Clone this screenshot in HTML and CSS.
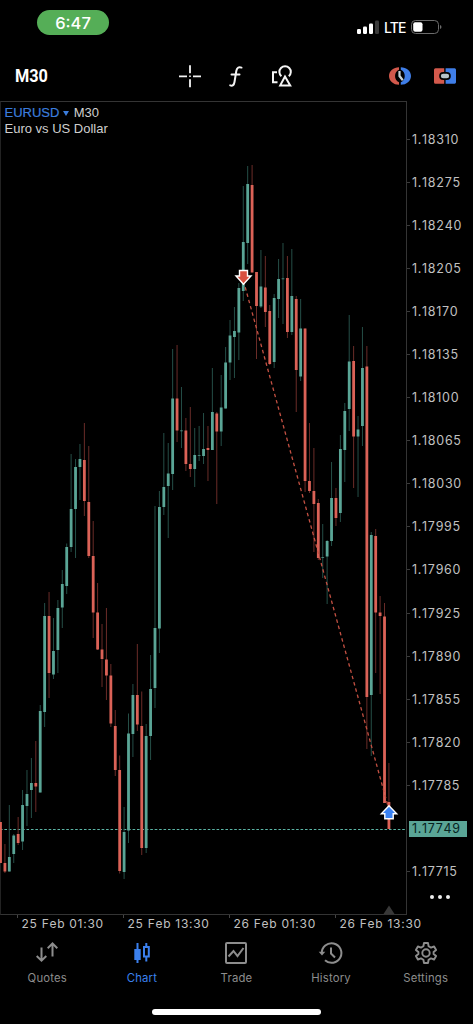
FILE: index.html
```html
<!DOCTYPE html>
<html lang="en">
<head>
<meta charset="utf-8">
<title>EURUSD M30</title>
<link rel="stylesheet" href="styles.css">
</head>
<body>
<div class="app">
  <header class="status">
    <span class="clock">6:47</span>
    <div class="signals">
      <svg width="22" height="14" viewBox="0 0 22 14"><g fill="#fff"><rect x="0" y="9" width="4" height="5" rx="1.2"/><rect x="6" y="6.500" width="4" height="7.500" rx="1.200"/><rect x="12" y="3.500" width="4" height="10.500" rx="1.200"/></g><rect x="18" y="0.500" width="4" height="13.500" rx="1.200" fill="#3a3a3a"/></svg>
      <span class="lte">LTE</span>
      <svg width="31" height="14" viewBox="0 0 31 14"><rect x=".5" y=".5" width="27" height="13" rx="4" fill="none" stroke="#6c6c6c"/><rect x="2.200" y="2.200" width="9.300" height="9.600" rx="2" fill="#fff"/><path d="M29 5v4q1.500-.6 1.500-2T29 5z" fill="#6c6c6c"/></svg>
    </div>
  </header>

  <div class="toolbar">
    <span class="period">M30</span>
    <div class="tools">
      <svg class="tool" viewBox="0 0 24 24" stroke="#f4f4f4" stroke-width="1.800"><path d="M1 12.300h8M15 12.300h8M12 1.300v8M12 15.300v8"/><path d="M11.200 12.300h1.600" stroke-width="1.500"/></svg>
      <svg class="tool" viewBox="0 0 24 24" fill="none" stroke="#f4f4f4" stroke-width="2" stroke-linecap="round"><path d="M17.500 3.600c-3-.9-4.600.2-5.200 3.400L10.500 18c-.5 3-1.900 4.200-4.300 3.400M7.500 10.500h8"/></svg>
      <svg class="tool" viewBox="0 0 24 24" fill="none" stroke="#f4f4f4" stroke-width="2"><path d="M7 8.300H3v10h4.500"/><path d="M11.400 12.300a5.700 5.700 0 1 1 7.400 0"/><path d="M15 12.500 10.200 21.400h10z"/></svg>
    </div>
    <div class="trade-tools">
      <svg class="tool" viewBox="0 0 24 24"><path d="M11 3.200C5.500 3.200 1 7 1 12s4.500 8.800 10 8.800v-2.500a7 7 0 0 1 0-12.600z" fill="#d3594c"/><path d="M12.800 3.200C18.500 3.200 23 7 23 12s-4.500 8.800-10.200 8.800v-2.500a7 7 0 0 0 0-12.600z" fill="#3f7ee8"/><path d="M11.500 7v5l3.300 4.200" fill="none" stroke="#c9d3d8" stroke-width="2.200"/></svg>
      <svg class="tool" viewBox="0 0 24 24"><path d="M2.500 4.200h8.700v15.600H2.500A1.500 1.500 0 0 1 1 18.300V5.700a1.500 1.500 0 0 1 1.500-1.500z" fill="#d3594c"/><path d="M12.600 4.200h9A1.500 1.500 0 0 1 23 5.700v12.600a1.500 1.500 0 0 1-1.400 1.500h-9z" fill="#3f7ee8"/><rect x="7" y="8.800" width="10" height="6.400" rx="3.200" fill="#b8c4ca" stroke="#050505" stroke-width="1.700"/></svg>
    </div>
  </div>

  <main class="chart">
    <div class="plot">
      <svg class="candles" id="candles" width="407" height="814" viewBox="0 101 407 814">
        <path class="price-line" d="M0 829.500H406"/>
        <g id="bars"></g>
        <path class="deal-line" d="M243.500 281 388.500 808"/>
        <path d="M243.500 284.300 236 276h3.500v-5.500h8V276h3.500z" fill="#d9503f" stroke="#fff" stroke-width="1.400"/>
        <path d="M389 805.700 381.300 813.800h3.500v5h8.400v-5h3.500z" fill="#3b82f2" stroke="#fff" stroke-width="1.400"/>
        <path d="M383.500 914 389 905.500l5.500 8.500z" fill="#383838"/>
      </svg>
      <div class="caption">
        <div><span class="symbol">EURUSD <i class="caret"></i></span> M30</div>
        <div>Euro vs US Dollar</div>
      </div>
    </div>
    <div class="prices">
      <span>1.18310</span><span>1.18275</span><span>1.18240</span><span>1.18205</span><span>1.18170</span><span>1.18135</span><span>1.18100</span><span>1.18065</span><span>1.18030</span><span>1.17995</span><span>1.17960</span><span>1.17925</span><span>1.17890</span><span>1.17855</span><span>1.17820</span><span>1.17785</span><span class="current"><b>1.17749</b></span><span>1.17715</span>
      <div class="more"><i></i><i></i><i></i></div>
    </div>
  </main>
  <div class="times"><span>25 Feb 01:30</span><span>25 Feb 13:30</span><span>26 Feb 01:30</span><span>26 Feb 13:30</span></div>

  <nav class="tabs">
    <div class="tab"><svg viewBox="0 0 24 24" fill="none" stroke="currentColor" stroke-width="2"><path d="M6.500 6.500v13M1.700 15l4.800 4.700 4.800-4.700M17.500 15.500V3M12.700 7.200l4.800-4.700 4.800 4.700"/></svg>Quotes</div>
    <div class="tab active"><svg viewBox="0 0 24 24" fill="none" stroke="currentColor" stroke-width="2"><path d="M7.500 2v20M16.300 2v4M16.300 16v4.500"/><rect x="5.300" y="9" width="4.400" height="9" fill="currentColor"/><rect x="14" y="6" width="4.800" height="9.500"/></svg>Chart</div>
    <div class="tab"><svg viewBox="0 0 24 24" fill="none" stroke="currentColor" stroke-width="2"><rect x="2" y="2" width="20" height="20" rx="1"/><path d="M4.500 15.500 9.500 10l4 5 6-8"/></svg>Trade</div>
    <div class="tab"><svg viewBox="0 0 24 24" fill="none" stroke="currentColor" stroke-width="2"><path d="M2.800 12.500A9.800 9.800 0 1 1 6 19.300"/><path d="M-.3 10.800h6.600L3 14.500z" fill="currentColor" stroke="none"/><path d="M12 6.500v6l4 4"/></svg>History</div>
    <div class="tab"><svg viewBox="0 0 24 24" fill="none" stroke="currentColor" stroke-width="1.900" stroke-linejoin="round"><path d="M10 2h4l.6 3.200 2.400 1.400 3.100-1.100 2 3.500-2.500 2.100v1.800l2.500 2.100-2 3.500-3.100-1.100-2.400 1.400L14 22h-4l-.6-3.200L7 17.400l-3.100 1.100-2-3.500 2.500-2.100v-1.800L1.900 9l2-3.500L7 6.600l2.400-1.400z"/><circle cx="12" cy="12" r="3.700"/></svg>Settings</div>
  </nav>
  <div class="home"></div>
</div>
<script src="chart.js"></script>
</body>
</html>
```

FILE: styles.css
```css
* { box-sizing: border-box; }
body { margin: 0; background: #000; }
.app {
  width: 473px;
  height: 1024px;
  overflow: hidden;
  display: flex;
  flex-direction: column;
  background: #000;
  color: #c0c0c0;
  font-family: Inter, "Liberation Sans", sans-serif;
}
svg { display: block; flex: none; }

.status {
  height: 50px;
  padding: 10px 31px 0 37px;
  display: flex;
  justify-content: space-between;
  align-items: flex-start;
}
.clock {
  width: 72px;
  height: 25px;
  border-radius: 13px;
  background: #55ae57;
  color: #fff;
  font-size: 16.500px;
  font-weight: 500;
  line-height: 26px;
  text-align: center;
}
.signals { display: flex; align-items: center; gap: 5px; height: 14px; margin-top: 10px; }
.lte { width: 22px; color: #fff; font-size: 14px; font-weight: 500; letter-spacing: -0.900px; white-space: nowrap; }

.toolbar {
  height: 51px;
  padding: 0 16px 0 15px;
  display: grid;
  grid-template-columns: 1fr auto 1fr;
  align-items: center;
}
.period {
  color: #fff;
  font-family: Roboto, sans-serif;
  font-size: 18.500px;
  font-weight: 700;
  transform: scaleX(0.880);
  transform-origin: left;
}
.tools { display: flex; gap: 22px; }
.trade-tools { display: flex; gap: 21px; justify-content: flex-end; }
.tool { width: 24px; height: 24px; }

.chart { display: flex; height: 814px; }
.plot {
  position: relative;
  width: 407px;
  border: 1px solid #343434;
  border-left-color: #222;
}
.candles { margin: -1px; }
.up { fill: #5aa596; }
.down { fill: #db6257; }
.wick-up { stroke: #254e47; }
.wick-down { stroke: #6a2c28; }
.price-line { stroke: #5cb5a6; stroke-dasharray: 2.600 1.820; }
.deal-line { stroke: #c35042; stroke-width: 1.300; stroke-dasharray: 3.500 3; }
.caption {
  position: absolute;
  left: 3.500px;
  top: 3px;
  font: 13px/16px "Liberation Sans", sans-serif;
  color: #cfcfcf;
}
.symbol { color: #3b7ddd; -webkit-text-stroke: 0.200px #3b7ddd; }
.caret {
  display: inline-block;
  margin: 0 1px 1px 0;
  border: 3px solid transparent;
  border-top: 5px solid #3b7ddd;
  border-bottom: 0;
}

.prices {
  width: 66px;
  padding-top: 16.500px;
  font-size: 12.500px;
  font-kerning: none;
  font-feature-settings: "calt" 0;
  letter-spacing: 0.700px;
}
.prices > span { display: flex; align-items: center; height: 43.100px; white-space: nowrap; }
.prices > span::before { content: ""; width: 3px; height: 1px; margin-right: 2px; background: #3b3b3b; }
.prices > .current::before { width: 2px; margin-right: 0; background: transparent; }
.current b {
  width: 58px;
  height: 16px;
  padding-left: 3px;
  background: #5aa596;
  color: #06231f;
  font-weight: 400;
  line-height: 16px;
}
.more { display: flex; justify-content: center; gap: 4px; margin-top: 2px; }
.more i { width: 4px; height: 4px; border-radius: 50%; background: #eee; }

.times { display: flex; padding-left: 17px; height: 18px; }
.times span {
  position: relative;
  flex: none;
  width: 106px;
  padding-left: 4.500px;
  font-size: 12px;
  font-kerning: none;
  font-feature-settings: "calt" 0;
  line-height: 18px;
  letter-spacing: 0.720px;
  white-space: nowrap;
}
.times span::before { content: ""; position: absolute; left: 0; top: 0; width: 1px; height: 3px; background: #444; }

.tabs { display: flex; height: 76px; padding-top: 8px; }
.tab {
  flex: 1;
  display: flex;
  flex-direction: column;
  align-items: center;
  gap: 5px;
  color: #8d8d8d;
  font-size: 11.300px;
  line-height: 16px;
  letter-spacing: 0.200px;
}
.tab svg { width: 24px; height: 24px; overflow: visible; }
.active { color: #3b80ee; }
.home { width: 169px; height: 6px; margin: 0 auto; border-radius: 3px; background: #fff; }
```

FILE: chart.js
```javascript
// Each bar: direction (1 up, 0 down), wick top, body top, body bottom, wick bottom
const bars = [
  [0,822,822,863,863],[0,844,863,871.5,873],[1,805,857,871.5,871.5],[1,834,835.5,854,863],[0,817,834,843,845],
  [1,790,805,841.5,850],[1,770,794,806,826],[1,758,783,790,818],[0,741,783,786.5,812],[1,705,711,792.5,792.5],
  [1,603,616,712,727],[0,592,616,673,698],[1,618,651,674.5,679],[1,600,608,650,673],[1,570,584,607.5,628],
  [1,543.5,547,586,594],[1,454,509,547,552],[1,459,467,509,558],[1,444,459,467,500],[0,423,460,501,516],
  [0,446,502,556,558],[0,521,556,612.5,638],[0,583,612.5,649.5,650],[0,624,649.5,659,687],[0,608,659.5,675.5,700],
  [0,664,675.5,723.5,727],[0,710,726,770,776],[0,755.5,770,871,873.5],[1,807,832,872,879],[1,713.5,733.5,830.5,843],
  [1,684,695,734,757],[0,644,695,724.5,731],[0,691.5,726,848,855],[1,724,736,848,853],[1,655,689,736,760],
  [1,506,628,688,708],[1,491,507,628.5,653],[1,433,487,507,515],[1,443,473.5,486,538],[1,349,398.5,474,490],
  [0,345,398.5,430.5,442],[1,387,430.5,431.2,448],[0,418,430.5,464,471],[0,407,464,469,477],[1,428,455,469,487],
  [1,426,455,455.7,461],[1,413,449,456,464],[0,426,448,450,481],[1,368,412,450,450],[0,412,413.5,431.5,504],
  [1,375,407.5,431.5,446],[1,347,362.5,408.5,408.5],[1,320,335.5,362.5,380],[1,307,331,337,378],[1,283,288,332.5,360],
  [1,186,242,291,301],[1,166,184,243,264],[0,165,185,272.5,272.5],[0,272,272,306,359],[1,250,286.5,306.5,308],
  [0,256,287.5,312,327],[0,305,311,364,365],[1,294,298,362,368],[1,259,279,299,318],[1,243,278.5,279.2,324],
  [0,256,278,332,338],[1,249,296,332,335],[0,296,299,370,412],[1,299,328.5,376.5,381],[0,328.5,328.5,481,492],
  [0,423,481,491,493],[0,448,491,504,552],[0,499,503,558,560],[1,524,557,557.7,578],[1,540,541,556.5,604],
  [1,462,498,541,546],[0,488,498,518,526],[1,435,449,513,522],[1,403,411,450,482],[1,315,361.5,409,431],
  [0,346,361,436.5,488],[1,416,429.5,436.5,497],[1,327,368,426,446],[0,346,366.5,697,749],[1,532,535,695,756],
  [0,529,536,612.5,673],[0,596,612.5,616,694],[0,603,616.5,803,803],[0,763,802,829,829]
];
const step = 4.414;
document.getElementById("bars").innerHTML = bars.map(([up, high, top, bottom, low], i) => {
  const x = 0.5 + i * step;
  const dir = up ? "up" : "down";
  return `<path class="wick-${dir}" d="M${x} ${high}V${low}"/>` +
    `<rect class="${dir}" x="${x - 1.4}" y="${top}" width="2.8" height="${bottom - top}"/>`;
}).join("");
```
